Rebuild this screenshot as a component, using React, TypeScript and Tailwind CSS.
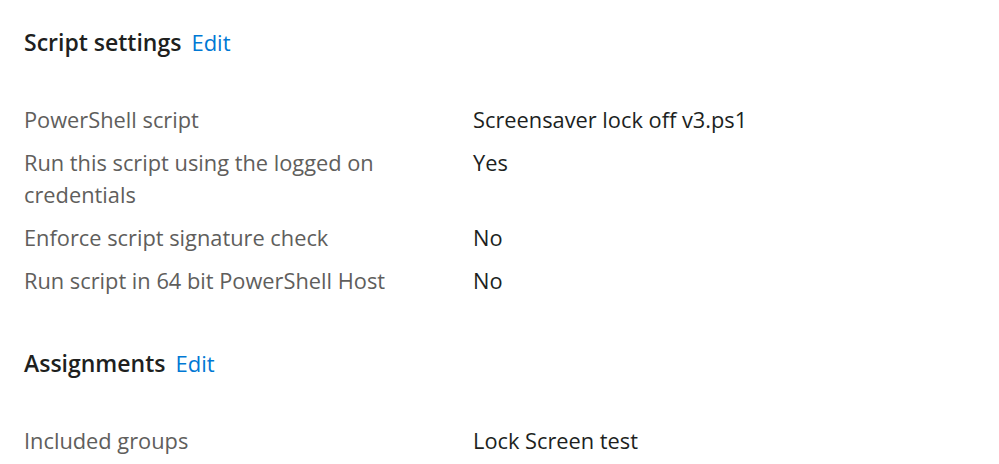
import React from "react";

const scriptRows = [
  { label: "PowerShell script", value: "Screensaver lock off v3.ps1" },
  { label: "Run this script using the logged on credentials", value: "Yes" },
  { label: "Enforce script signature check", value: "No" },
  { label: "Run script in 64 bit PowerShell Host", value: "No" },
];

const assignmentRows = [{ label: "Included groups", value: "Lock Screen test" }];

const Section = ({
  title,
  rows,
  className = "",
}: {
  title: string;
  rows: { label: string; value: string }[];
  className?: string;
}) => (
  <section className={className}>
    <h2 className="flex items-baseline gap-[10px] text-[23px] font-semibold leading-8 text-[#201f1e]">
      {title}
      <a href="#" className="text-[22px] font-normal text-[#0078d4]">
        Edit
      </a>
    </h2>
    <div className="mt-[46px] flex flex-col gap-[11px]">
      {rows.map((row, i) => (
        <div key={i} className="grid grid-cols-[449px_1fr] text-[21.8px] leading-8">
          <div className="pr-[40px] text-[#605e5c]">{row.label}</div>
          <div className="text-[#201f1e]">{row.value}</div>
        </div>
      ))}
    </div>
  </section>
);

export default function App() {
  return (
    <div
      className="min-h-screen bg-white px-6 pt-[26px]"
      style={{ fontFamily: '"Open Sans", "Noto Sans", sans-serif' }}
    >
      <Section title="Script settings" rows={scriptRows} />
      <Section title="Assignments" rows={assignmentRows} className="mt-[50px]" />
    </div>
  );
}
